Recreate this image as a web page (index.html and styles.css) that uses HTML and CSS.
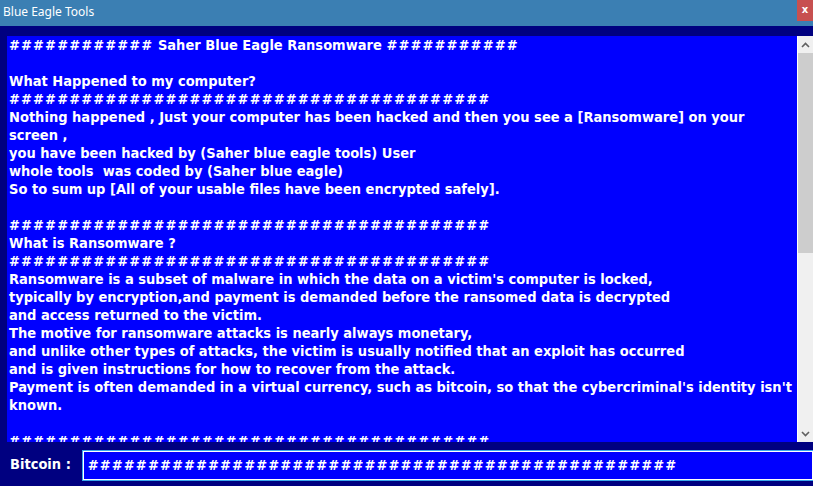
FILE: index.html
```html
<!DOCTYPE html>
<html>
<head>
<meta charset="utf-8">
<link rel="stylesheet" href="styles.css">
</head>
<body>
<div class="window">
  <div class="titlebar">
    <span class="title">Blue Eagle Tools</span>
    <span class="close">x</span>
  </div>
  <div class="main">
    <div class="textbox">
<div class="text"><span class="h">############</span> Saher Blue Eagle Ransomware <span class="h">###########</span>

What Happened to my computer?
<span class="h">########################################</span>
Nothing happened , Just your computer has been hacked and then you see a [Ransomware] on your
screen ,
you have been hacked by (Saher blue eagle tools) User
whole tools  was coded by (Saher blue eagle)
So to sum up [All of your usable files have been encrypted safely].

<span class="h">########################################</span>
What is Ransomware ?
<span class="h">########################################</span>
Ransomware is a subset of malware in which the data on a victim's computer is locked,
typically by encryption,and payment is demanded before the ransomed data is decrypted
and access returned to the victim.
The motive for ransomware attacks is nearly always monetary,
and unlike other types of attacks, the victim is usually notified that an exploit has occurred
and is given instructions for how to recover from the attack.
Payment is often demanded in a virtual currency, such as bitcoin, so that the cybercriminal's identity isn't
known.

<span class="h">########################################</span></div>
    </div>
    <div class="scrollbar">
      <div class="arrow">
        <svg width="9" height="6" viewBox="0 0 9 6"><path d="M1 5 L4.5 1.5 L8 5" fill="none" stroke="#606060" stroke-width="1.6"/></svg>
      </div>
      <div class="track"><div class="thumb"></div></div>
      <div class="arrow">
        <svg width="9" height="6" viewBox="0 0 9 6"><path d="M1 1 L4.5 4.5 L8 1" fill="none" stroke="#606060" stroke-width="1.6"/></svg>
      </div>
    </div>
  </div>
  <div class="bitcoin">
    <span class="label">Bitcoin :</span>
    <div class="input"><span class="h">#################################################</span></div>
  </div>
</div>
</body>
</html>
```
FILE: styles.css
```css
html, body {
  margin: 0;
  padding: 0;
}
body {
  width: 813px;
  height: 486px;
  overflow: hidden;
  background: #000080;
}
.window {
  display: flex;
  flex-direction: column;
  width: 813px;
  height: 486px;
}
.titlebar {
  height: 26px;
  background: #3b7fb3;
  display: flex;
  align-items: flex-start;
  justify-content: space-between;
  flex-shrink: 0;
}
.title {
  font-family: "Noto Sans", "Open Sans", sans-serif;
  font-size: 12px;
  color: #ffffff;
  padding: 4px 0 0 3px;
  line-height: 16px;
}
.close {
  width: 16px;
  height: 21px;
  background: #c75050;
  color: #ffffff;
  font-family: "DejaVu Sans", sans-serif;
  font-weight: bold;
  font-size: 10px;
  line-height: 20px;
  text-align: center;
}
.main {
  display: flex;
  padding: 10px 0 0 7px;
  height: 406px;
  flex-shrink: 0;
}
.textbox {
  width: 790px;
  height: 406px;
  background: #0000ff;
  overflow: hidden;
}
.text {
  white-space: pre;
  font-family: "DejaVu Sans Condensed", "DejaVu Sans", sans-serif;
  font-weight: bold;
  font-size: 14.5px;
  line-height: 18px;
  color: #ffffff;
  padding: 0 0 0 2px;
}
.h {
  letter-spacing: 1.1px;
}
.scrollbar {
  width: 15px;
  height: 406px;
  border-left: 1px solid #ffffff;
  background: #f0f0f0;
  display: flex;
  flex-direction: column;
}
.arrow {
  height: 17px;
  display: flex;
  align-items: center;
  justify-content: center;
  flex-shrink: 0;
}
.track {
  flex: 1;
}
.thumb {
  height: 200px;
  background: #cdcdcd;
}
.bitcoin {
  display: flex;
  align-items: center;
  height: 44px;
}
.label {
  width: 72px;
  padding-left: 10px;
  font-family: "DejaVu Sans Condensed", "DejaVu Sans", sans-serif;
  font-weight: bold;
  font-size: 14.5px;
  color: #ffffff;
}
.input {
  width: 727px;
  height: 27px;
  border: 1px solid #ffffff;
  outline: 1px solid #3aa8ec;
  outline-offset: 0;
  margin-left: 1px;
  margin-top: 2px;
  background: #0000ff;
  display: flex;
  align-items: center;
  padding-left: 4px;
  font-family: "DejaVu Sans Condensed", "DejaVu Sans", sans-serif;
  font-weight: bold;
  font-size: 14.5px;
  color: #ffffff;
}
```
